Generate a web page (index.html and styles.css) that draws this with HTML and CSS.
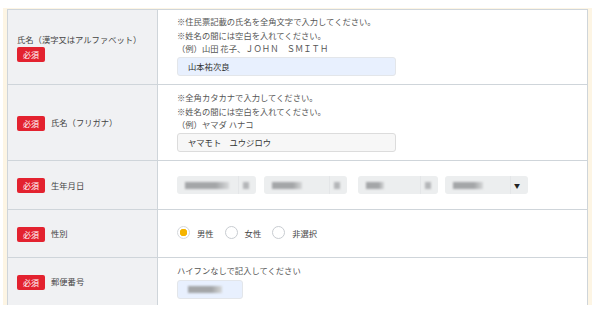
FILE: index.html
```html
<!DOCTYPE html>
<html lang="ja">
  <head>
    <meta charset="UTF-8" />
    <meta name="viewport" content="width=device-width, initial-scale=1.0" />
    <title>会員情報入力</title>
    <link rel="stylesheet" href="styles.css">
  </head>
  <body>
    <div class="wrap">
      <table class="form-table">
        <tr class="row-name">
          <th>
            <span class="label stacked">氏名（漢字又はアルファベット）</span>
            <span class="badge stacked">必須</span>
          </th>
          <td>
            <p class="note">※住民票記載の氏名を全角文字で入力してください。</p>
            <p class="note">※姓名の間には空白を入れてください。</p>
            <p class="note">（例）山田 花子、ＪＯＨＮ　ＳＭＩＴＨ</p>
            <div class="input filled name-input">山本祐次良</div>
          </td>
        </tr>
        <tr class="row-kana">
          <th>
            <span class="badge">必須</span><span class="label">氏名（フリガナ）</span>
          </th>
          <td>
            <p class="note">※全角カタカナで入力してください。</p>
            <p class="note">※姓名の間には空白を入れてください。</p>
            <p class="note">（例）ヤマダ ハナコ</p>
            <div class="input plain name-input">ヤマモト　ユウジロウ</div>
          </td>
        </tr>
        <tr class="row-birth">
          <th>
            <span class="badge">必須</span><span class="label">生年月日</span>
          </th>
          <td>
            <div class="selects">
              <div class="select s1"><span class="blur b-long"></span><span class="divider"></span><span class="blur b-short"></span></div>
              <div class="select s2"><span class="blur b-mid"></span><span class="divider"></span><span class="blur b-short"></span></div>
              <div class="select s3"><span class="blur b-small"></span><span class="divider"></span><span class="blur b-short"></span></div>
              <div class="select s4"><span class="blur b-mid"></span><span class="divider"></span><span class="arrow">▼</span></div>
            </div>
          </td>
        </tr>
        <tr class="row-sex">
          <th>
            <span class="badge">必須</span><span class="label">性別</span>
          </th>
          <td>
            <div class="radios">
              <label class="radio"><span class="dot checked"></span>男性</label>
              <label class="radio"><span class="dot"></span>女性</label>
              <label class="radio"><span class="dot"></span>非選択</label>
            </div>
          </td>
        </tr>
        <tr class="row-zip">
          <th>
            <span class="badge">必須</span><span class="label">郵便番号</span>
          </th>
          <td>
            <p class="note">ハイフンなしで記入してください</p>
            <div class="input filled zip-input"><span class="blur b-zip"></span></div>
          </td>
        </tr>
      </table>
    </div>
  </body>
</html>
```

FILE: styles.css
```css
body {
  margin: 0;
  background-color: #fff;
  font-family: "Noto Sans CJK JP", "Noto Sans", sans-serif;
  color: #444;
}
.wrap {
  margin: 8px 8px 0 3px;
  padding: 1px 4px 0 4px;
  height: 296px;
  overflow: hidden;
  background-color: #fdf5e4;
}
.form-table {
  width: 100%;
  border-collapse: collapse;
  background-color: #fff;
}
.form-table th,
.form-table td {
  border: 1px solid #cfd5da;
  vertical-align: middle;
  text-align: left;
}
.form-table th {
  width: 140px;
  padding: 0 0 0 9px;
  background-color: #f0f1f3;
  font-weight: normal;
  font-size: 8.3px;
  line-height: 15px;
}
.form-table td {
  padding: 0 0 0 19px;
  font-size: 8.3px;
}
.row-name { height: 75px; }
.row-name td { padding-bottom: 3px; }
.row-kana { height: 76px; }
.row-kana td { padding-bottom: 2px; }
.row-birth { height: 49px; }
.row-sex { height: 48px; }
.row-sex td { padding-bottom: 2px; }
.row-zip { height: 48px; }
.label {
  font-size: 8.3px;
  color: #444;
  vertical-align: middle;
}
.badge {
  display: inline-block;
  width: 28px;
  height: 15px;
  line-height: 15px;
  margin-right: 6px;
  border-radius: 2px;
  background-color: #e3222f;
  color: #fff;
  font-size: 8px;
  text-align: center;
  vertical-align: middle;
}
.label.stacked {
  display: block;
  line-height: 12px;
}
.badge.stacked {
  display: block;
  margin-top: 2px;
}
.note {
  margin: 0;
  font-size: 8.3px;
  line-height: 13.5px;
  color: #555;
}
.input {
  box-sizing: border-box;
  height: 19px;
  margin-top: 1px;
  padding-left: 10px;
  border: 1px solid #e3e6ea;
  border-radius: 3px;
  font-size: 8.3px;
  line-height: 17px;
  color: #333;
}
.filled {
  background-color: #e8f0fe;
}
.plain {
  background-color: #f7f7f7;
  border-color: #dcdcdc;
}
.name-input {
  width: 219px;
}
.zip-input {
  width: 66px;
  margin-top: 2px;
}
.selects {
  display: flex;
}
.select {
  position: relative;
  display: flex;
  align-items: center;
  box-sizing: border-box;
  height: 18px;
  padding-left: 8px;
  border-radius: 3px;
  background-color: #eceeef;
}
.s1 { width: 79px; }
.s2 { width: 83px; margin-left: 8px; }
.s3 { width: 80px; margin-left: 11px; }
.s4 { width: 83px; margin-left: 7px; }
.blur {
  display: inline-block;
  height: 7px;
  background: linear-gradient(90deg, #a4a6a8 0 70%, #d6d8d9 100%);
  filter: blur(1.1px);
}
.b-long { width: 44px; }
.b-mid { width: 30px; }
.b-small { width: 18px; }
.b-short {
  width: 6px;
  position: absolute;
  right: 7px;
  background: #b4b6b8;
}
.divider {
  position: absolute;
  top: 0;
  bottom: 0;
  right: 17px;
  width: 1px;
  background-color: #e4e6e8;
}
.b-zip {
  width: 34px;
  margin-top: 5px;
  vertical-align: top;
}
.arrow {
  position: absolute;
  right: 8px;
  font-size: 6px;
  color: #222;
}
.radios {
  display: flex;
  gap: 11px;
}
.radio {
  display: flex;
  align-items: center;
  font-size: 8.3px;
  color: #444;
}
.dot {
  box-sizing: border-box;
  width: 13px;
  height: 13px;
  margin-right: 7px;
  border: 1px solid #c8ccd1;
  border-radius: 50%;
  background-color: #fff;
}
.dot.checked {
  border-color: #d5d8dc;
  background: radial-gradient(circle, #f5b400 0 3.5px, #fff 4px);
}
```
